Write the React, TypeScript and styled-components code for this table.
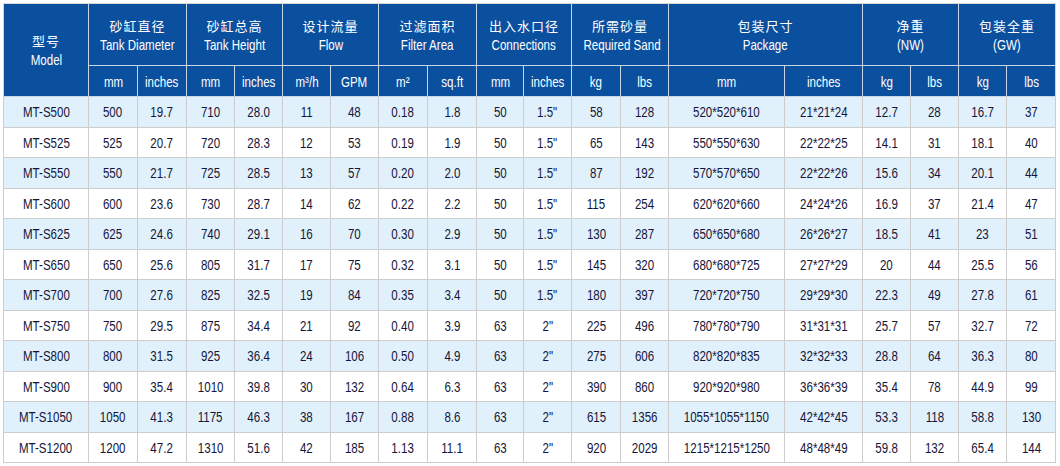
import React from 'react';
import styled, { createGlobalStyle } from 'styled-components';

const GlobalStyle = createGlobalStyle`
  html, body {
    margin: 0;
    padding: 0;
    background: #ffffff;
  }
  body {
    font-family: "Liberation Sans", Arial, "Noto Sans CJK SC", sans-serif;
  }
`;

const colWidths = [85, 49, 49, 48, 48, 48, 48, 49, 49, 47, 48, 49, 48, 116, 78, 48, 48, 48, 49];

const groups = [
  { cn: '砂缸直径', en: 'Tank Diameter', subs: ['mm', 'inches'] },
  { cn: '砂缸总高', en: 'Tank Height', subs: ['mm', 'inches'] },
  { cn: '设计流量', en: 'Flow', subs: ['m³/h', 'GPM'] },
  { cn: '过滤面积', en: 'Filter Area', subs: ['m²', 'sq.ft'] },
  { cn: '出入水口径', en: 'Connections', subs: ['mm', 'inches'] },
  { cn: '所需砂量', en: 'Required Sand', subs: ['kg', 'lbs'] },
  { cn: '包装尺寸', en: 'Package', subs: ['mm', 'inches'] },
  { cn: '净重', en: '(NW)', subs: ['kg', 'lbs'] },
  { cn: '包装全重', en: '(GW)', subs: ['kg', 'lbs'] },
];

const rows: string[][] = [
  ['MT-S500', '500', '19.7', '710', '28.0', '11', '48', '0.18', '1.8', '50', '1.5"', '58', '128', '520*520*610', '21*21*24', '12.7', '28', '16.7', '37'],
  ['MT-S525', '525', '20.7', '720', '28.3', '12', '53', '0.19', '1.9', '50', '1.5"', '65', '143', '550*550*630', '22*22*25', '14.1', '31', '18.1', '40'],
  ['MT-S550', '550', '21.7', '725', '28.5', '13', '57', '0.20', '2.0', '50', '1.5"', '87', '192', '570*570*650', '22*22*26', '15.6', '34', '20.1', '44'],
  ['MT-S600', '600', '23.6', '730', '28.7', '14', '62', '0.22', '2.2', '50', '1.5"', '115', '254', '620*620*660', '24*24*26', '16.9', '37', '21.4', '47'],
  ['MT-S625', '625', '24.6', '740', '29.1', '16', '70', '0.30', '2.9', '50', '1.5"', '130', '287', '650*650*680', '26*26*27', '18.5', '41', '23', '51'],
  ['MT-S650', '650', '25.6', '805', '31.7', '17', '75', '0.32', '3.1', '50', '1.5"', '145', '320', '680*680*725', '27*27*29', '20', '44', '25.5', '56'],
  ['MT-S700', '700', '27.6', '825', '32.5', '19', '84', '0.35', '3.4', '50', '1.5"', '180', '397', '720*720*750', '29*29*30', '22.3', '49', '27.8', '61'],
  ['MT-S750', '750', '29.5', '875', '34.4', '21', '92', '0.40', '3.9', '63', '2"', '225', '496', '780*780*790', '31*31*31', '25.7', '57', '32.7', '72'],
  ['MT-S800', '800', '31.5', '925', '36.4', '24', '106', '0.50', '4.9', '63', '2"', '275', '606', '820*820*835', '32*32*33', '28.8', '64', '36.3', '80'],
  ['MT-S900', '900', '35.4', '1010', '39.8', '30', '132', '0.64', '6.3', '63', '2"', '390', '860', '920*920*980', '36*36*39', '35.4', '78', '44.9', '99'],
  ['MT-S1050', '1050', '41.3', '1175', '46.3', '38', '167', '0.88', '8.6', '63', '2"', '615', '1356', '1055*1055*1150', '42*42*45', '53.3', '118', '58.8', '130'],
  ['MT-S1200', '1200', '47.2', '1310', '51.6', '42', '185', '1.13', '11.1', '63', '2"', '920', '2029', '1215*1215*1250', '48*48*49', '59.8', '132', '65.4', '144'],
];

// the column where the source image shows no dividing line in the body
const OPEN_COL = 11;

export default function App() {
  return (
    <>
      <GlobalStyle />
      <Page>
        <SpecTable>
          <colgroup>
            {colWidths.map((w, i) => (
              <col key={i} style={{ width: w }} />
            ))}
          </colgroup>
          <thead>
            <tr>
              <GroupHead rowSpan={2}>
                <Cn>型号</Cn>
                <En>
                  <Narrow>Model</Narrow>
                </En>
              </GroupHead>
              {groups.map((g, i) => (
                <GroupHead key={g.en} colSpan={2} $open={i === 5}>
                  <Cn>{g.cn}</Cn>
                  <En>
                    <Narrow>{g.en}</Narrow>
                  </En>
                </GroupHead>
              ))}
            </tr>
            <tr>
              {groups.map((g) =>
                g.subs.map((s, j) => (
                  <SubHead key={g.en + j}>
                    <Narrow>{s}</Narrow>
                  </SubHead>
                ))
              )}
            </tr>
          </thead>
          <tbody>
            {rows.map((r, i) => (
              <Row key={r[0]} $shaded={i % 2 === 0}>
                {r.map((v, j) => (
                  <Cell key={j} $open={j === OPEN_COL}>
                    <Narrow>{v}</Narrow>
                  </Cell>
                ))}
              </Row>
            ))}
          </tbody>
        </SpecTable>
      </Page>
    </>
  );
}

const Page = styled.div`
  padding: 3px 0 0 3px;
`;

const SpecTable = styled.table`
  table-layout: fixed;
  width: 1052px;
  border-collapse: collapse;
  border: 1px solid #d6d6d6;
  color: #15153a;
  font-size: 15px;
`;

// condensed look of the original (Arial Narrow), no narrow face is installed
const Narrow = styled.span`
  display: inline-block;
  white-space: nowrap;
  transform: scaleX(0.77);
  transform-origin: center;
`;

const GroupHead = styled.th<{ $open?: boolean }>`
  height: 61px;
  padding: 0;
  background: #0b4f9f;
  color: #ffffff;
  font-weight: normal;
  text-align: center;
  vertical-align: middle;
  border: 1px solid #c9d6e6;
  border-top-color: #d6d6d6;
  ${({ $open }) => ($open ? 'border-left-color: #0b4f9f;' : '')}
`;

const Cn = styled.div`
  font-family: "Noto Sans CJK SC", sans-serif;
  font-size: 13px;
  line-height: 19px;
  letter-spacing: 1px;
`;

const En = styled.div`
  font-size: 15px;
  line-height: 19px;
`;

const SubHead = styled.th`
  height: 30px;
  padding: 0;
  background: #0b4f9f;
  color: #ffffff;
  font-weight: normal;
  font-size: 15px;
  text-align: center;
  border: 1px solid #c9d6e6;
`;

const Row = styled.tr<{ $shaded: boolean }>`
  height: 30.5px;
  background: ${({ $shaded }) => ($shaded ? '#e1f1fc' : '#ffffff')};
`;

const Cell = styled.td<{ $open?: boolean }>`
  padding: 0;
  text-align: center;
  font-size: 15px;
  border: 1px solid #cdcdcd;
  ${({ $open }) => ($open ? 'border-left-color: transparent;' : '')}
`;
